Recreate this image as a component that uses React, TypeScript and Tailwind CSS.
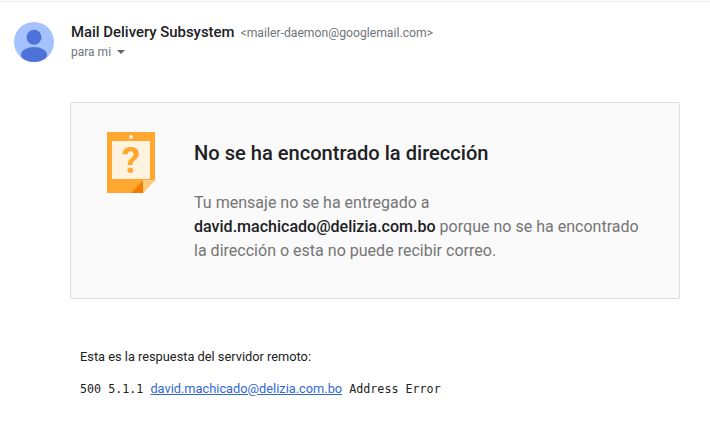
export default function App() {
  return (
    <div className="w-[710px] h-[437px] bg-white overflow-hidden font-['Roboto',sans-serif] pt-[1px]">
      <div className="h-[1px] bg-[#eeeeee]" />
      <div className="flex pl-[14px] pt-[20px]">
        <svg width="40" height="40" viewBox="0 0 40 40" className="shrink-0">
          <defs>
            <clipPath id="avatar">
              <circle cx="20" cy="20" r="20" />
            </clipPath>
          </defs>
          <circle cx="20" cy="20" r="20" fill="#a4c2fc" />
          <circle cx="20" cy="15.3" r="7.5" fill="#4f72d9" />
          <ellipse cx="20" cy="33" rx="13" ry="8" fill="#4f72d9" clipPath="url(#avatar)" />
        </svg>
        <div className="ml-[17px] -mt-[1px]">
          <div className="flex items-baseline h-[20px]">
            <span className="text-[14.9px] font-medium text-[#202124]">Mail Delivery Subsystem</span>
            <span className="ml-[6px] text-[12.2px] text-[#70757a]">&lt;mailer-daemon@googlemail.com&gt;</span>
          </div>
          <div className="flex items-center h-[20px] mt-[1px] text-[12px] text-[#70757a]">
            para mi
            <span className="ml-[6px] w-0 h-0 border-x-[4px] border-x-transparent border-t-[4px] border-t-[#5f6368]" />
          </div>
        </div>
      </div>
      <div className="ml-[70px] mt-[40px] w-[610px] h-[197px] bg-[#fafafa] border border-[#dadce0] rounded-[2px] flex pl-[36px] pt-[29px]">
        <svg width="48" height="62" viewBox="0 0 48 62" className="shrink-0">
          <path d="M0 0h48v48L36 61H0z" fill="#ffa72e" />
          <rect x="5" y="9" width="38" height="38" fill="#fff3e0" />
          <path d="M24 61L36 48.5V61z" fill="#f57c00" />
          <path d="M36 48H48L36 61z" fill="#ffcc80" />
          <circle cx="24" cy="5" r="2" fill="#fff3e0" />
          <text x="24" y="41" textAnchor="middle" fontSize="37" fontWeight="700" fill="#ffa72e" fontFamily="Roboto, sans-serif">?</text>
        </svg>
        <div className="ml-[39px] w-[452px]">
          <h1 className="text-[20.1px] leading-[24px] font-medium text-[#202124] mt-[9px]">No se ha encontrado la dirección</h1>
          <p className="mt-[26px] text-[16.05px] leading-[24px] text-[#757575]">
            Tu mensaje no se ha entregado a<br />
            <span className="font-medium text-[#202124]">david.machicado@delizia.com.bo</span> porque no se ha encontrado<br />
            la dirección o esta no puede recibir correo.
          </p>
        </div>
      </div>
      <p className="ml-[80px] mt-[50px] text-[12.8px] leading-[16px] text-[#222222]">Esta es la respuesta del servidor remoto:</p>
      <p className="ml-[80px] mt-[16px] text-[11.7px] leading-[16px] text-[#222222] font-['DejaVu_Sans_Mono',monospace] whitespace-pre">
        500 5.1.1 <span className="font-['Roboto',sans-serif] text-[12.8px] text-[#3367d6] underline">david.machicado@delizia.com.bo</span> Address Error
      </p>
    </div>
  );
}
